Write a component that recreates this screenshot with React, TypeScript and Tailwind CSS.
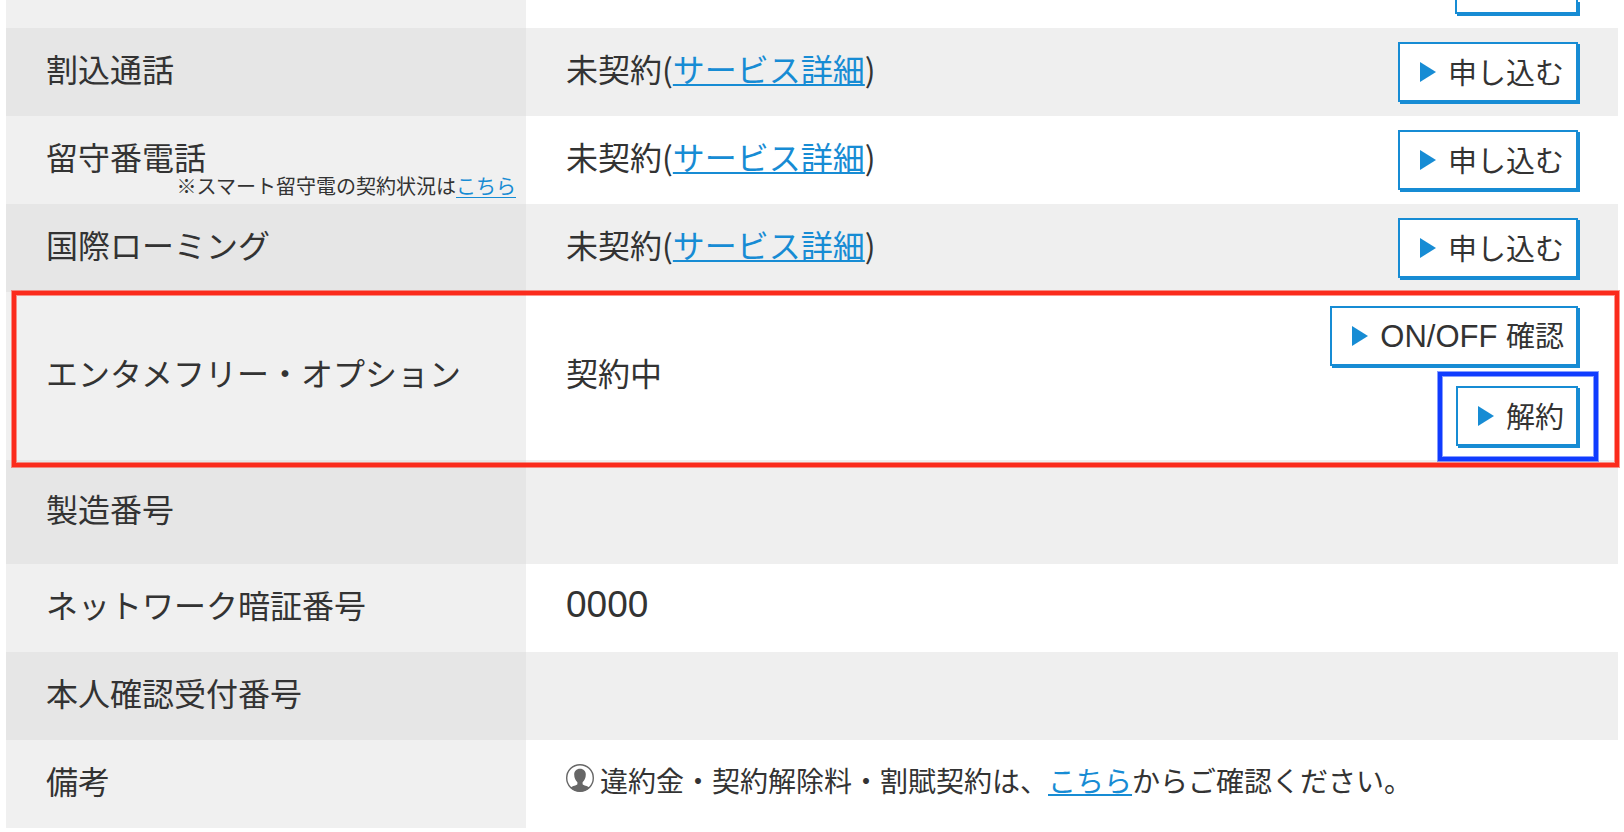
import type { ReactNode } from "react";

/* ===== SHARED PIECES ===== */

function ActionButton({ children }: { children: ReactNode }) {
  return (
    <button
      type="button"
      className="flex h-15 items-center gap-3 border-2 border-[#178cd4] bg-white pl-5 pr-3 text-[29px] leading-9 whitespace-nowrap shadow-[2px_2px_0_#178cd4]"
    >
      <svg viewBox="0 0 16 20" className="h-5 w-4 shrink-0" aria-hidden="true">
        <path d="M0 0L16 10L0 20Z" fill="#178cd4" />
      </svg>
      <span className="pb-0.5">{children}</span>
    </button>
  );
}

function TextLink({ children }: { children: ReactNode }) {
  return (
    <a href="#" className="text-[#178cd4] underline decoration-2 underline-offset-2">
      {children}
    </a>
  );
}

function PersonIcon() {
  return (
    <svg viewBox="0 0 28 28" className="mb-1 h-7 w-7 shrink-0" aria-hidden="true">
      <circle cx="14" cy="14" r="13.3" fill="#fff" stroke="#666" strokeWidth="1.4" />
      <path
        d="M14 4.8C10.4 4.8 8.2 7.2 8.2 10.6C8.2 14 9.6 16.6 11.4 18.2V20.2C10.4 21.6 6.6 21.8 4.6 23.4C7 26 10.4 27.6 14 27.6S21 26 23.4 23.4C21.4 21.8 17.6 21.6 16.6 20.2V18.2C18.4 16.6 19.8 14 19.8 10.6C19.8 7.2 17.6 4.8 14 4.8Z"
        fill="#666"
      />
    </svg>
  );
}

type RowProps = {
  label: ReactNode;
  shaded?: boolean;
  height?: string;
  action?: ReactNode;
  children?: ReactNode;
};

function Row({ label, shaded = false, height = "h-22", action, children }: RowProps) {
  return (
    <tr className={`${height} ${shaded ? "bg-[#efefef]" : "bg-white"}`}>
      <th
        scope="row"
        className={`pl-10 pb-2 text-left font-normal ${shaded ? "bg-[#e6e6e6]" : "bg-[#f0f0f0]"}`}
      >
        {label}
      </th>
      <td className="pl-10 pr-10">
        <div className="flex items-center justify-between">
          <div className="pb-2">{children}</div>
          {action}
        </div>
      </td>
    </tr>
  );
}

function NotSubscribed() {
  return (
    <>
      未契約(<TextLink>サービス詳細</TextLink>)
    </>
  );
}

/* ===== PAGE ===== */

export default function App() {
  return (
    <main className="bg-white px-1.5 pb-1 font-['Noto_Sans_CJK_JP',sans-serif] text-[32px] leading-10 text-[#333]">
      <table className="w-full table-fixed border-collapse">
        <colgroup>
          <col className="w-[520px]" />
          <col />
        </colgroup>
        <tbody>
          {/* lower edge of the previous row */}
          <tr className="h-7">
            <th scope="row" aria-label="前の項目" className="bg-[#f0f0f0]" />
            <td className="pr-10 align-top">
              <button
                type="button"
                aria-label="解約"
                className="ml-auto block h-3.5 w-[123px] border-2 border-t-0 border-[#178cd4] bg-white shadow-[2px_2px_0_#178cd4]"
              />
            </td>
          </tr>

          <Row label="割込通話" shaded action={<ActionButton>申し込む</ActionButton>}>
            <NotSubscribed />
          </Row>

          <tr className="h-22 bg-white">
            <th scope="row" className="bg-[#f0f0f0] pt-6 pb-1 pl-10 text-left align-top font-normal">
              <div className="leading-8">留守番電話</div>
              <div className="pr-2.5 text-right text-xl leading-7">
                ※スマート留守電の契約状況は
                <a href="#" className="text-[#178cd4] underline decoration-1 underline-offset-[3px]">
                  こちら
                </a>
              </div>
            </th>
            <td className="pl-10 pr-10">
              <div className="flex items-center justify-between">
                <div className="pb-2">
                  <NotSubscribed />
                </div>
                <ActionButton>申し込む</ActionButton>
              </div>
            </td>
          </tr>

          <Row label="国際ローミング" shaded action={<ActionButton>申し込む</ActionButton>}>
            <NotSubscribed />
          </Row>

          {/* highlighted row */}
          <tr className="relative h-42 bg-white">
            <th scope="row" className="bg-[#f0f0f0] pb-2 pl-10 text-left font-normal">
              エンタメフリー・オプション
              <span className="pointer-events-none absolute -top-px -right-px -bottom-[7px] left-1.5 z-10 border-4 border-[#fb2b1c] shadow-[0_0_0_1px_#fb2b1c80,inset_0_0_0_1px_#fb2b1c80]" />
            </th>
            <td className="pl-10 pr-10">
              <div className="flex items-center justify-between">
                <div className="pb-2">契約中</div>
                <div className="flex flex-col items-end gap-5">
                  <ActionButton>
                    <span className="font-['Liberation_Sans'] text-[31px]">ON/OFF </span>確認
                  </ActionButton>
                  <div className="relative">
                    <ActionButton>解約</ActionButton>
                    <span className="pointer-events-none absolute -top-3.5 -right-5 -bottom-[15px] -left-[18px] border-4 border-[#103cff] shadow-[0_0_0_1px_#103cff80,inset_0_0_0_1px_#103cff80]" />
                  </div>
                </div>
              </div>
            </td>
          </tr>

          <Row label="製造番号" shaded height="h-26" />

          <Row label="ネットワーク暗証番号">
            <span className="font-['Liberation_Sans'] text-[37px]">0000</span>
          </Row>

          <Row label="本人確認受付番号" shaded />

          <Row label="備考">
            <div className="flex items-center gap-1.5 text-[28px]">
              <PersonIcon />
              <p>
                違約金・契約解除料・割賦契約は、<TextLink>こちら</TextLink>からご確認ください。
              </p>
            </div>
          </Row>
        </tbody>
      </table>
    </main>
  );
}
